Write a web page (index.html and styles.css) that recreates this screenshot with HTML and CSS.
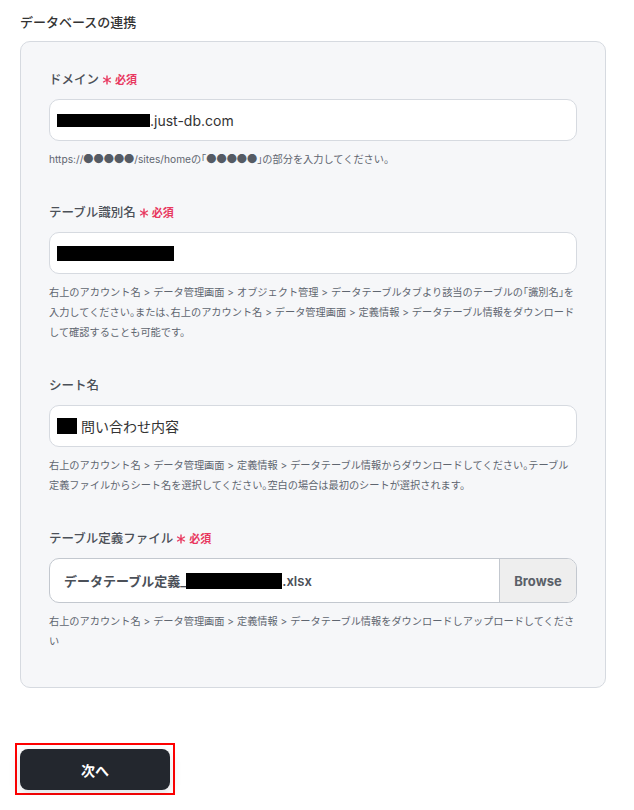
FILE: index.html
```html
<!DOCTYPE html>
<html lang="ja">
<head>
<meta charset="utf-8">
<link rel="stylesheet" href="styles.css">
</head>
<body>
<div class="page">
  <h2 class="title">データベースの連携</h2>
  <div class="card">
    <div class="field">
      <div class="label">ドメイン<span class="req"><svg class="star" viewBox="0 0 10 10"><path d="M5 0.5V9.5M1.1 2.75L8.9 7.25M1.1 7.25L8.9 2.75"/></svg>必須</span></div>
      <div class="input"><span class="redact r1"></span>.just-db.com</div>
      <p class="help">https://<span class="dot">●●●●●</span>/sites/homeの「<span class="dot">●●●●●</span>」の部分を入力してください。</p>
    </div>
    <div class="field">
      <div class="label">テーブル識別名<span class="req"><svg class="star" viewBox="0 0 10 10"><path d="M5 0.5V9.5M1.1 2.75L8.9 7.25M1.1 7.25L8.9 2.75"/></svg>必須</span></div>
      <div class="input"><span class="redact r2"></span></div>
      <p class="help">右上のアカウント名 &gt; データ管理画面 &gt; オブジェクト管理 &gt; データテーブルタブより該当のテーブルの「識別名」を入力してください。または、右上のアカウント名 &gt; データ管理画面 &gt; 定義情報 &gt; データテーブル情報をダウンロードして確認することも可能です。</p>
    </div>
    <div class="field">
      <div class="label">シート名</div>
      <div class="input"><span class="redact r3"></span>問い合わせ内容</div>
      <p class="help">右上のアカウント名 &gt; データ管理画面 &gt; 定義情報 &gt; データテーブル情報からダウンロードしてください。テーブル定義ファイルからシート名を選択してください。空白の場合は最初のシートが選択されます。</p>
    </div>
    <div class="field">
      <div class="label">テーブル定義ファイル<span class="req"><svg class="star" viewBox="0 0 10 10"><path d="M5 0.5V9.5M1.1 2.75L8.9 7.25M1.1 7.25L8.9 2.75"/></svg>必須</span></div>
      <div class="file">
        <div class="file-name">データテーブル定義_<span class="redact r4"></span>.xlsx</div>
        <div class="browse">Browse</div>
      </div>
      <p class="help">右上のアカウント名 &gt; データ管理画面 &gt; 定義情報 &gt; データテーブル情報をダウンロードしアップロードしてください</p>
    </div>
  </div>
  <div class="highlight"><button class="next">次へ</button></div>
</div>
</body>
</html>
```
FILE: styles.css
```css
* { box-sizing: border-box; }
html, body { margin: 0; padding: 0; background: #fff; }
body {
  font-family: Inter, "Noto Sans CJK JP", sans-serif;
  color: #333;
}
.page { padding: 12px 0 0 20px; }
.title {
  margin: 0;
  font-size: 13px;
  line-height: 20px;
  font-weight: 500;
  color: #333;
}
.card {
  margin-top: 9px;
  width: 586px;
  background: #f6f7f9;
  border: 1px solid #d6dae0;
  border-radius: 10px;
  padding: 28px 28px 2px 28px;
}
.field { margin-bottom: 34px; }
.label {
  display: flex;
  align-items: center;
  font-size: 12.5px;
  line-height: 20px;
  font-weight: 500;
  color: #4b5058;
}
.req {
  display: inline-flex;
  align-items: center;
  margin-left: 3px;
  color: #e8385f;
  font-size: 11px;
  font-weight: 600;
}
.star {
  width: 10px;
  height: 10px;
  margin-right: 3px;
  stroke: #e8385f;
  stroke-width: 1.4;
  fill: none;
}
.input {
  margin-top: 9px;
  height: 42px;
  background: #fff;
  border: 1px solid #d6dae0;
  border-radius: 10px;
  padding: 0 7px;
  display: flex;
  align-items: center;
  font-size: 14px;
  color: #333;
}
.redact { display: inline-block; background: #000; }
.r1 { width: 93px; height: 13px; }
.r2 { width: 117px; height: 15px; }
.r3 { width: 20px; height: 16px; margin-right: 4px; }
.r4 { width: 96px; height: 16px; }
.help {
  margin: 8px 0 0;
  font-size: 10.2px;
  line-height: 20px;
  color: #5f6670;
  font-feature-settings: "halt";
}
.dot {
  font-family: "Noto Sans CJK JP", sans-serif;
  font-feature-settings: normal;
  color: #555b64;
}
.file {
  margin-top: 9px;
  height: 45px;
  display: flex;
  background: #fff;
  border: 1px solid #c3c8cf;
  border-radius: 10px;
  overflow: hidden;
}
.file-name {
  flex: 1;
  display: flex;
  align-items: center;
  padding-left: 14px;
  font-size: 13px;
  font-weight: 600;
  color: #4b5058;
}
.browse {
  width: 77px;
  display: flex;
  align-items: center;
  justify-content: center;
  background: #eeeeee;
  border-left: 1px solid #c3c8cf;
  font-size: 13px;
  font-weight: 700;
  color: #5a6068;
}
.highlight {
  display: inline-block;
  margin: 55px 0 0 -5px;
  border: 2px solid #ff0000;
  padding: 4px 3px 3px 3px;
}
.next {
  display: block;
  width: 150px;
  height: 41px;
  background: #23272e;
  color: #fff;
  border: none;
  border-radius: 8px;
  font-family: Inter, "Noto Sans CJK JP", sans-serif;
  font-size: 14px;
  font-weight: 700;
  box-shadow: 0 4px 12px rgba(30, 40, 60, 0.15);
}
```
